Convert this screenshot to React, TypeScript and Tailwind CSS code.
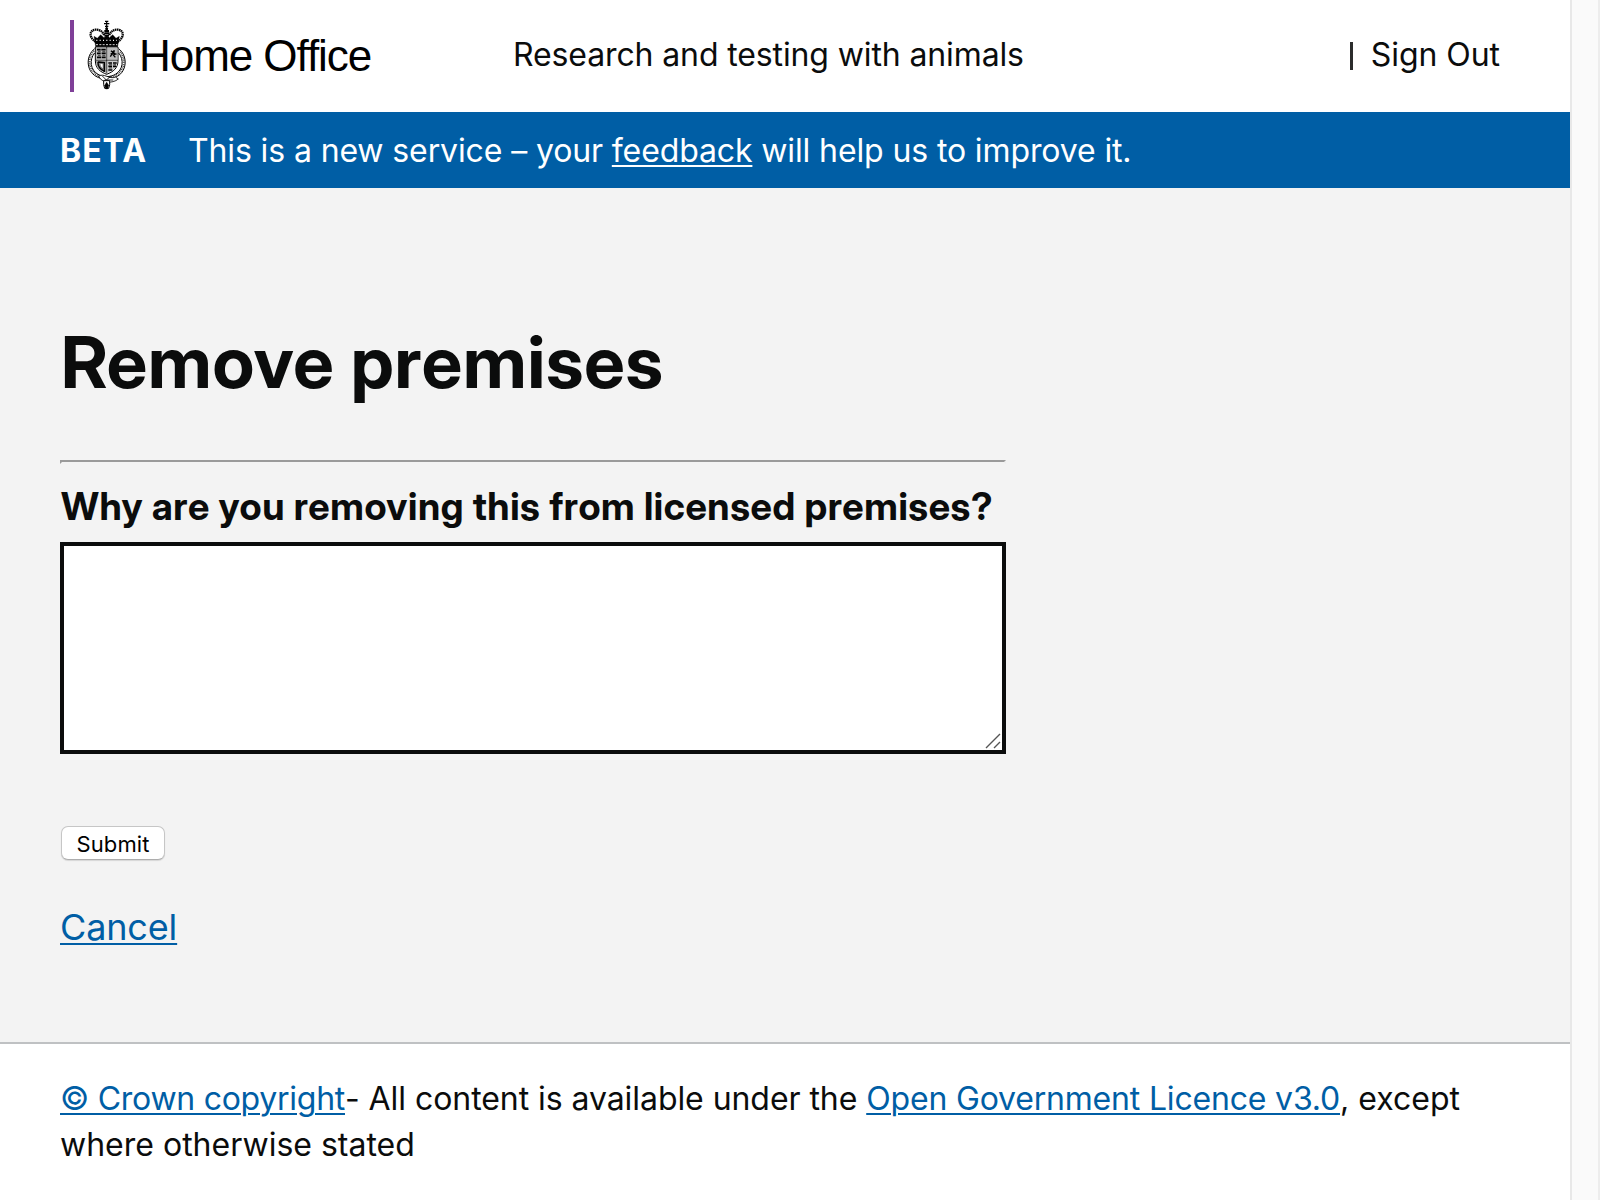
const blueLink = "text-[#005ea5] underline decoration-2 underline-offset-[3px]";

function Crest() {
  return (
    <svg viewBox="81 27 117 210" className="h-[70px] w-[39px] shrink-0" fill="none" stroke="#000">
      {/* cross and orb */}
      <path d="M140 31v20M132 38h16M135 31h10M135 46h10" strokeWidth="3.5" />
      <circle cx="140" cy="53" r="4.5" fill="#000" stroke="none" />
      {/* crown arches */}
      <path d="M107 92C84 78 90 57 106 56c14-1 22 6 27 18" strokeWidth="7" strokeDasharray="4.5 1.5" />
      <path d="M173 92c23-14 17-35 1-36c-14-1-22 6-27 18" strokeWidth="7" strokeDasharray="4.5 1.5" />
      <path d="M140 57v32" strokeWidth="14" strokeDasharray="6 1" />
      <path d="M102 76l10 6l10-11l11 10l7-8l7 8l11-10l10 11l10-6l-5 31h-66z" fill="#000" strokeWidth="1" />
      <path d="M109 88h62" stroke="#fff" strokeWidth="4" strokeDasharray="3 7" />
      <path d="M108 101h64" stroke="#fff" strokeWidth="2.5" strokeDasharray="6 4" />
      {/* garter */}
      <path d="M104 113c-27 21-26 66 4 83c18 11 46 11 64 0c30-17 31-62 4-83" strokeWidth="3" />
      <path d="M104 126c-17 20-13 51 10 64c15 9 37 9 52 0c23-13 27-44 10-64" strokeWidth="3" />
      <path d="M102 120c-20 22-18 55 9 72c18 10 40 10 58 0c27-17 29-50 9-72" stroke="#333" strokeWidth="6" strokeDasharray="2.5 3" />
      {/* shield */}
      <path d="M106 108h68v40c0 24-14 34-34 42c-20-8-34-18-34-42z" fill="#fff" strokeWidth="3" />
      <path d="M108 110h31v37h-31zM141 110h31v37h-31z" fill="#bbb" stroke="none" />
      <path d="M108 149h31v37c-18-8-30-15-31-37z" fill="#999" stroke="none" />
      <path d="M141 149h31c-1 22-13 29-31 37z" fill="#ccc" stroke="none" />
      <path d="M140 108v80M106 148h68" strokeWidth="2" />
      <path d="M111 116h11M124 116h13M111 127h11M125 127h12M111 139h12M125 139h12" strokeWidth="5" />
      <path d="M114 121h8M127 122h9M114 133h8M127 133h9" strokeWidth="2" />
      <path d="M153 119l5 5l5-6l-2 9l6 2l-7 3l6 7M158 126l-7 11M152 129l7-2" strokeWidth="4" />
      <path d="M114 153l19 2v28M114 153c-1 15 9 23 19 28" strokeWidth="4" />
      <path d="M120 157l9 1v16c-6-5-9-9-9-17z" fill="#fff" strokeWidth="1" />
      <path d="M145 156h11M159 156h11M145 166h11M159 166h9M145 177h12" strokeWidth="5" />
      <path d="M147 161h9M160 161h8M147 171h9" strokeWidth="2" />
      {/* buckle and strap end */}
      <path d="M116 196c14-12 34 11 50 2l9 6c-18 15-50 12-59-8z" fill="#fff" strokeWidth="2.5" />
      <path d="M127 195l12 12l13-11M134 207h26" strokeWidth="2.5" />
      <path d="M131 209h18v12l-3 11h-12l-3-11z" fill="#fff" strokeWidth="3" />
      <path d="M140 213l6 10l-3 11h-6l-3-11z" fill="#000" strokeWidth="1" />
    </svg>
  );
}

export default function App() {
  return (
    <div className="flex h-[1200px] w-[1600px] overflow-hidden bg-white font-['Inter',sans-serif] text-[#0b0c0c]">
      <div className="flex w-[1570px] shrink-0 flex-col">
        <header className="flex h-[112px] shrink-0 items-start pr-[70px] pl-[70px] pt-5 text-[32px]">
          <div className="flex w-[443px] shrink-0">
            <div className="h-[72px] w-1 bg-[#7f3f98]" />
            <div className="ml-[13px]">
              <Crest />
            </div>
            <div className="ml-[13px] pt-[8px] font-['Liberation_Sans',sans-serif] text-[44px] leading-[56px] tracking-[-1.05px] whitespace-nowrap text-black">
              Home Office
            </div>
          </div>
          <div className="grow leading-[70px] tracking-[-0.12px] whitespace-nowrap">Research and testing with animals</div>
          <nav className="flex items-center gap-[18px] leading-[70px] tracking-[-0.05px] whitespace-nowrap">
            <span className="mt-0.5 h-7 w-[3px] bg-[#2b2c2c]" />
            <a>Sign Out</a>
          </nav>
        </header>

        <div className="flex h-[76px] shrink-0 items-center bg-[#005ea5] pt-0.5 pl-[60px] text-[32px] text-white">
          <strong className="w-[128px] font-bold tracking-[1px]">BETA</strong>
          <span className="tracking-[-0.12px] whitespace-nowrap">
            This is a new service – your <a className="underline decoration-2 underline-offset-[3px]">feedback</a> will help us to improve it.
          </span>
        </div>

        <main className="flex h-[854px] shrink-0 flex-col items-start bg-[#f3f3f3] pt-[134px] pl-[60px] font-['Inter_Display','Inter',sans-serif]">
          <h1 className="ml-px text-[72px] leading-[80px] font-bold tracking-[0.8px] whitespace-nowrap">Remove premises</h1>
          <hr className="mt-[58px] h-1 w-[946px] border-2 border-t-[#9a9a9a] border-r-[#eee] border-b-[#f3f3f3] border-l-[#9a9a9a]" />
          <label className="mt-[18px] ml-px text-[38px] leading-[48px] font-bold tracking-[0.58px] whitespace-nowrap">
            Why are you removing this from licensed premises?
          </label>
          <div className="mt-3 flex h-[212px] w-[946px] items-end justify-end border-4 border-[#0b0c0c] bg-white">
            <svg viewBox="0 0 18 18" className="h-[18px] w-[18px]" stroke="#555" strokeWidth="1.4">
              <path d="M2 16L16 2M10 16l6-6" />
            </svg>
          </div>
          <button className="mt-[72px] ml-px h-[34px] w-[104px] rounded-[7px] border border-[#c6c6c6] border-b-[#adadad] bg-white font-['Inter',sans-serif] text-[22px] leading-[34px] tracking-[0.1px] text-black shadow-[0_1px_1px_rgba(0,0,0,0.12)]">
            Submit
          </button>
          <a className={`mt-[43px] font-['Inter',sans-serif] text-[36px] leading-[48px] tracking-[-0.15px] ${blueLink}`}>Cancel</a>
        </main>

        <footer className="grow border-t-2 border-[#bfc1c3] bg-white pt-[32px] pl-[60px] text-[32px] leading-[46px]">
          <p className="whitespace-nowrap">
            <a className={`tracking-[-0.27px] ${blueLink}`}>© Crown copyright</a>
            <span className="tracking-[-0.06px]">- All content is available under the </span>
            <a className={`tracking-[-0.18px] ${blueLink}`}>Open Government Licence v3.0</a>, except
            <br />
            where otherwise stated
          </p>
        </footer>
      </div>
      <div className="w-[30px] shrink-0 border-x-2 border-l-[#e8e8e8] border-r-[#ededed] bg-[#fafafa]" />
    </div>
  );
}
